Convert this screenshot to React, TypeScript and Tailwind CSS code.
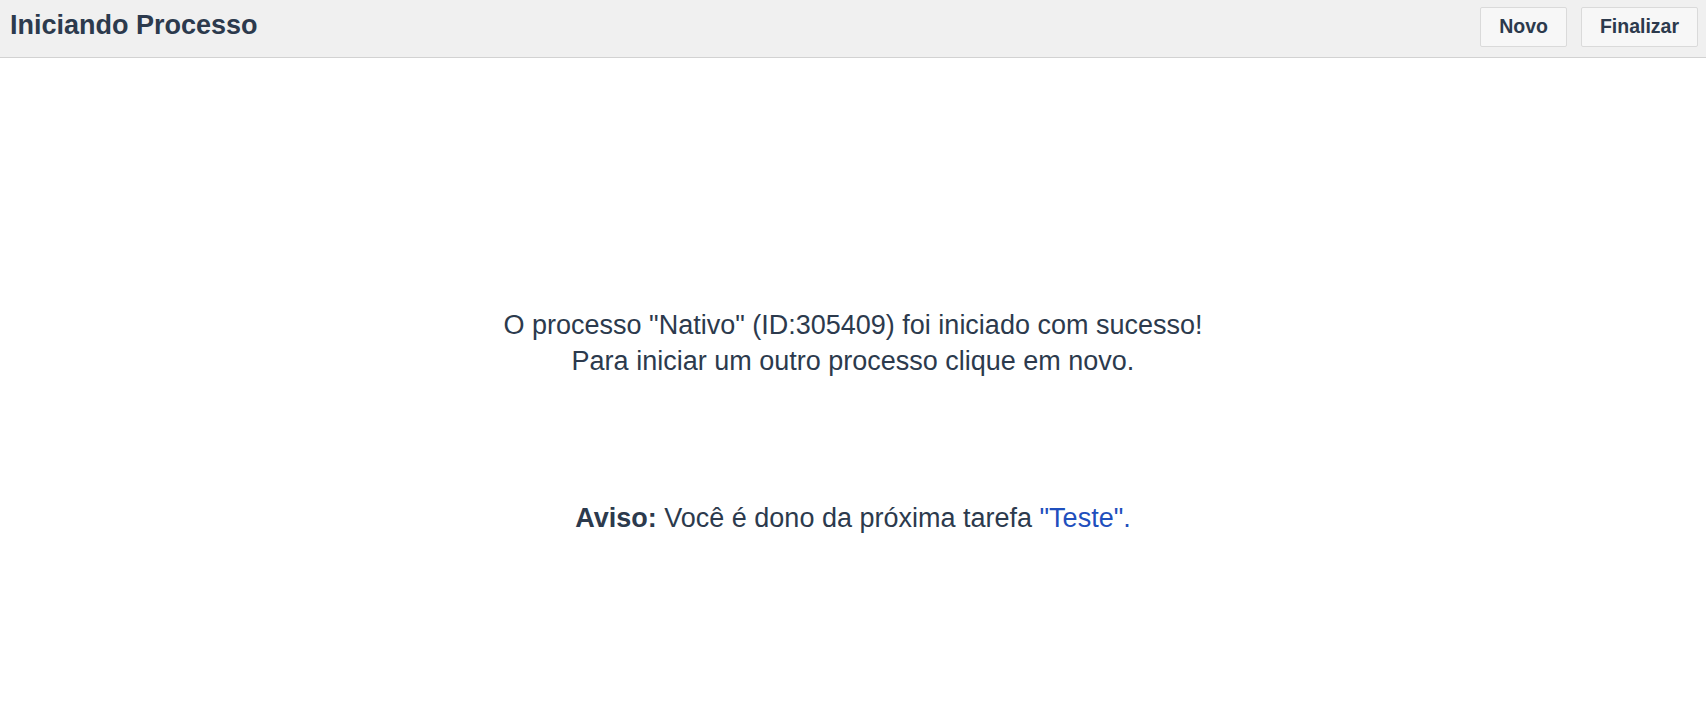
export default function App() {
  return (
    <div
      className="min-h-screen bg-white text-[#2c3a4d]"
      style={{ fontFamily: '"Liberation Sans", Arial, Helvetica, sans-serif' }}
    >
      <header className="flex h-[58px] items-start justify-between border-b border-[#d2d2d2] bg-[#f0f0f0] pl-[10px] pr-[8px] pt-[7px]">
        <h1 className="text-[27px] font-bold leading-[36px]">Iniciando Processo</h1>
        <div className="flex gap-[14px]">
          <button className="h-[40px] rounded-[2px] border border-[#dadada] bg-[#f7f7f7] px-[18px] text-[19.5px] font-bold leading-none">
            Novo
          </button>
          <button className="h-[40px] rounded-[2px] border border-[#dadada] bg-[#f7f7f7] px-[18px] text-[19.5px] font-bold leading-none">
            Finalizar
          </button>
        </div>
      </header>

      <main className="flex flex-col items-center pt-[249px] text-center text-[27px] leading-[36px]">
        <p>
          O processo "Nativo" (ID:305409) foi iniciado com sucesso!
          <br />
          Para iniciar um outro processo clique em novo.
        </p>
        <p className="mt-[121px]">
          <b className="font-bold">Aviso:</b> Você é dono da próxima tarefa{" "}
          <a href="#" className="text-[#1f4fbd]">
            "Teste".
          </a>
        </p>
      </main>
    </div>
  );
}
